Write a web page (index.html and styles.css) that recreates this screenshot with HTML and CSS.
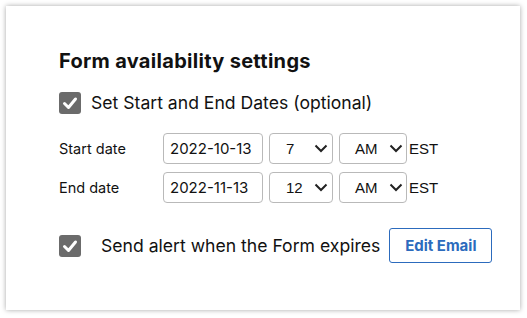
FILE: index.html
```html
<!DOCTYPE html>
<html lang="en">
<head>
  <meta charset="UTF-8">
  <title>Form availability settings</title>
  <link rel="stylesheet" href="styles.css">
</head>
<body>
  <div class="card">
    <h2>Form availability settings</h2>

    <label class="check-line">
      <span class="box"><svg viewBox="0 0 22 22" width="22" height="22"><path d="M5.5 11.5l4 4 7-8.5" fill="none" stroke="#fff" stroke-width="3" stroke-linecap="round" stroke-linejoin="round"/></svg></span>
      Set Start and End Dates (optional)
    </label>

    <div class="dates">
      <div class="row">
        <span class="lbl">Start date</span>
        <div class="field date">2022-10-13</div>
        <div class="field sel hour"><span>7</span><svg viewBox="0 0 14 9" width="14" height="9"><path d="M1.5 1.5l5.5 5.5 5.5-5.5" fill="none" stroke="#222" stroke-width="2"/></svg></div>
        <div class="field sel ampm"><span>AM</span><svg viewBox="0 0 14 9" width="14" height="9"><path d="M1.5 1.5l5.5 5.5 5.5-5.5" fill="none" stroke="#222" stroke-width="2"/></svg></div>
        <span class="tz">EST</span>
      </div>
      <div class="row">
        <span class="lbl">End date</span>
        <div class="field date">2022-11-13</div>
        <div class="field sel hour"><span>12</span><svg viewBox="0 0 14 9" width="14" height="9"><path d="M1.5 1.5l5.5 5.5 5.5-5.5" fill="none" stroke="#222" stroke-width="2"/></svg></div>
        <div class="field sel ampm"><span>AM</span><svg viewBox="0 0 14 9" width="14" height="9"><path d="M1.5 1.5l5.5 5.5 5.5-5.5" fill="none" stroke="#222" stroke-width="2"/></svg></div>
        <span class="tz">EST</span>
      </div>
    </div>

    <div class="alert">
      <span class="box"><svg viewBox="0 0 22 22" width="22" height="22"><path d="M5.5 11.5l4 4 7-8.5" fill="none" stroke="#fff" stroke-width="3" stroke-linecap="round" stroke-linejoin="round"/></svg></span>
      <span class="alert-text">Send alert when the Form expires</span>
      <button class="edit">Edit Email</button>
    </div>
  </div>
</body>
</html>
```

FILE: styles.css
```css
* { margin: 0; padding: 0; box-sizing: border-box; }

body {
  font-family: Inter, "Noto Sans", sans-serif;
  color: #111;
  background: #fff;
  padding: 6px 7px 8px 6px;
}

.card {
  width: 514px;
  height: 304px;
  background: #fff;
  box-shadow: 0 0 5px rgba(0,0,0,0.35);
  padding: 43px 0 0 53px;
}

h2 {
  font-size: 20px;
  line-height: 24px;
  font-weight: 700;
  letter-spacing: 0.3px;
  margin-bottom: 19px;
}

.box {
  width: 22px;
  height: 22px;
  border-radius: 3px;
  background: #6b6b6b;
  display: flex;
  flex: none;
}

.check-line {
  display: flex;
  align-items: center;
  gap: 10px;
  font-size: 17.6px;
  line-height: 22px;
}

.dates {
  margin-top: 19px;
  display: flex;
  flex-direction: column;
  gap: 8px;
}

.row {
  display: flex;
  align-items: center;
  gap: 6px;
}

.lbl {
  width: 98px;
  font-size: 14.5px;
}

.field {
  height: 31px;
  border: 1px solid #b9b9b9;
  border-radius: 4px;
  display: flex;
  align-items: center;
  font-size: 15px;
}

.date {
  width: 100px;
  padding-left: 6px;
}

.sel {
  font-family: "Liberation Sans", Arial, sans-serif;
  justify-content: space-between;
  padding: 0 4px 0 16px;
}

.hour { width: 64px; }
.ampm { width: 68px; padding-left: 15px; padding-right: 3px; margin-right: -4px; }

.tz {
  font-family: "Liberation Sans", Arial, sans-serif;
  font-size: 15px;
}

.alert {
  margin-top: 25px;
  display: flex;
  align-items: center;
}

.alert-text {
  font-size: 17.6px;
  margin-left: 20px;
  margin-right: 9px;
}

.edit {
  font-family: inherit;
  width: 103px;
  height: 35px;
  background: #fff;
  border: 1px solid #2c6bbd;
  border-radius: 3px;
  color: #2c6bbd;
  font-size: 15px;
  font-weight: 700;
}
```
